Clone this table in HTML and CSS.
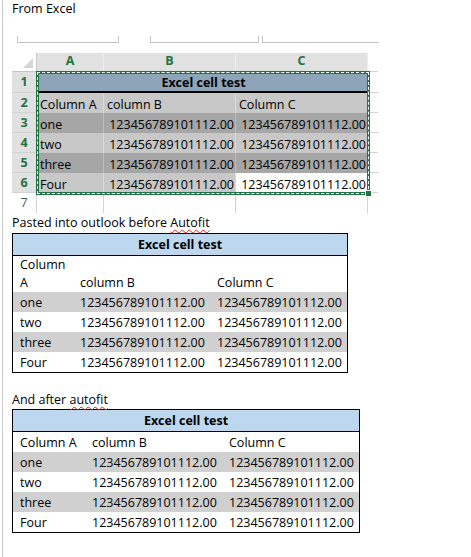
FILE: index.html
```html
<!DOCTYPE html>
<html>
<head>
<meta charset="utf-8">
<title>Excel paste</title>
<link rel="stylesheet" href="styles.css">
</head>
<body>
<div class="page">
  <p class="label">From Excel</p>
  <div class="brackets"><span class="br br1"></span><span class="br br2"></span><span class="br br3"></span></div>

  <div class="sheet">
    <div class="corner"><svg width="25" height="19" viewBox="0 0 25 19"><polygon points="11,15 21,15 21,5" fill="#d6d6d6"/></svg></div>
    <div class="colhdr">A</div>
    <div class="colhdr">B</div>
    <div class="colhdr">C</div>
    <div class="edge"></div>

    <div class="rowhdr">1</div>
    <div class="cell title">Excel cell test</div>
    <div class="edge"></div>

    <div class="rowhdr">2</div>
    <div class="cell lt">Column A</div>
    <div class="cell lt">column B</div>
    <div class="cell lt">Column C</div>
    <div class="edge"></div>

    <div class="rowhdr">3</div>
    <div class="cell dk">one</div>
    <div class="cell dk num">123456789101112.00</div>
    <div class="cell dk num">123456789101112.00</div>
    <div class="edge"></div>

    <div class="rowhdr">4</div>
    <div class="cell lt">two</div>
    <div class="cell lt num">123456789101112.00</div>
    <div class="cell lt num">123456789101112.00</div>
    <div class="edge"></div>

    <div class="rowhdr">5</div>
    <div class="cell dk">three</div>
    <div class="cell dk num">123456789101112.00</div>
    <div class="cell dk num">123456789101112.00</div>
    <div class="edge"></div>

    <div class="rowhdr">6</div>
    <div class="cell lt">Four</div>
    <div class="cell lt num">123456789101112.00</div>
    <div class="cell num">123456789101112.00</div>
    <div class="edge"></div>

    <div class="rowhdr off">7</div>
    <div class="cell"></div>
    <div class="cell"></div>
    <div class="cell"></div>
    <div class="edge blank"></div>

    <div class="selection"></div>
  </div>

  <p class="label after-sheet">Pasted into outlook before <span class="sp">Autofit</span></p>
  <table class="ol ol1">
    <colgroup><col class="c1"><col class="c2"><col class="c3"></colgroup>
    <thead><tr><th colspan="3">Excel cell test</th></tr></thead>
    <tbody>
      <tr class="two-line"><td>Column A</td><td>column B</td><td>Column C</td></tr>
      <tr class="g"><td>one</td><td>123456789101112.00</td><td>123456789101112.00</td></tr>
      <tr><td>two</td><td>123456789101112.00</td><td>123456789101112.00</td></tr>
      <tr class="g"><td>three</td><td>123456789101112.00</td><td>123456789101112.00</td></tr>
      <tr><td>Four</td><td>123456789101112.00</td><td>123456789101112.00</td></tr>
    </tbody>
  </table>

  <p class="label after-table">And after <span class="sp">autofit</span></p>
  <table class="ol ol2">
    <colgroup><col class="c1"><col class="c2"><col class="c3"></colgroup>
    <thead><tr><th colspan="3">Excel cell test</th></tr></thead>
    <tbody>
      <tr><td>Column A</td><td>column B</td><td>Column C</td></tr>
      <tr class="g"><td>one</td><td>123456789101112.00</td><td>123456789101112.00</td></tr>
      <tr><td>two</td><td>123456789101112.00</td><td>123456789101112.00</td></tr>
      <tr class="g"><td>three</td><td>123456789101112.00</td><td>123456789101112.00</td></tr>
      <tr><td>Four</td><td>123456789101112.00</td><td>123456789101112.00</td></tr>
    </tbody>
  </table>
</div>
</body>
</html>
```

FILE: styles.css
```css
body {
  margin: 0;
  background: #fff;
  font-family: "Open Sans", "Noto Sans", sans-serif;
  font-size: 12.5px;
  color: #000;
}

.page {
  margin-left: 2px;
  border-left: 1px solid #c8c8c8;
  padding-left: 9px;
  min-height: 557px;
  box-sizing: border-box;
}

.label {
  margin: 0;
  line-height: 18px;
  white-space: nowrap;
}

.after-sheet { margin-top: 1px; }
.after-table { margin-top: 18px; }

.sp {
  text-decoration: underline wavy #e02020;
  text-decoration-thickness: 1px;
  text-decoration-skip-ink: none;
  text-underline-offset: 2px;
}

/* ruler brackets */
.brackets {
  display: flex;
  margin-top: 18px;
  height: 7px;
}
.br {
  height: 7px;
  box-sizing: border-box;
  border: 1px solid #c3c3c3;
  border-top: none;
}
.br1 { margin-left: 5px; width: 102px; }
.br2 { margin-left: 31px; width: 109px; }
.br3 { margin-left: 3px; width: 117px; border-right: none; }

/* excel sheet */
.sheet {
  position: relative;
  margin-top: 10px;
  width: 366px;
  display: grid;
  grid-template-columns: 25px 67px 132px 132px 10px;
  grid-template-rows: 19px 21px repeat(6, 20px);
}
.sheet > div { box-sizing: border-box; overflow: hidden; white-space: nowrap; }

.corner {
  background: #fff;
  border-right: 1px solid #c6c6c6;
  border-bottom: 1px solid #c6c6c6;
}
.corner svg { display: block; }

.colhdr {
  background: #e1e1e1;
  color: #217346;
  font-weight: bold;
  text-align: center;
  line-height: 16px;
  border-right: 1px solid #eeeeee;
  border-bottom: 1px solid #c6c6c6;
}

.rowhdr {
  background: #e1e1e1;
  color: #217346;
  font-weight: bold;
  text-align: center;
  line-height: 20px;
  border-right: 1px solid #c6c6c6;
  border-bottom: 1px solid #d2d2d2;
}
.rowhdr.off {
  background: #fff;
  color: #3f5877;
  font-weight: normal;
  border-bottom: none;
  border-right: 1px solid #d4d4d4;
}

.edge { border-bottom: 1px solid #d4d4d4; }
.edge.blank { border-bottom: none; }

.cell {
  padding: 2px 1px 0 3px;
  line-height: 19px;
  border-right: 1px solid #d4d4d4;
}
.cell.title {
  grid-column: 2 / span 3;
  background: #8da4b9;
  font-weight: bold;
  text-align: center;
  padding-top: 1px;
  border-bottom: 2px solid #000;
  border-right: none;
}
.cell.lt { background: #c8c8c8; border-right-color: #d9d9d9; }
.cell.dk { background: #a6a6a6; border-right-color: #bdbdbd; }
.cell.num { text-align: right; }

.selection {
  position: absolute;
  left: 24px;
  top: 18px;
  width: 334px;
  height: 124px;
  box-sizing: border-box;
  border: 3px solid #217346;
  overflow: visible !important;
  pointer-events: none;
}
.selection::before {
  content: "";
  position: absolute;
  left: -2px;
  top: -2px;
  right: -2px;
  bottom: -2px;
  border: 1px dashed #fff;
}
.selection::after {
  content: "";
  position: absolute;
  right: -5px;
  bottom: -5px;
  width: 5px;
  height: 5px;
  background: #217346;
  border: 1px solid #fff;
}

/* outlook tables */
.ol {
  border-collapse: separate;
  border-spacing: 0;
  border: 1px solid #000;
  table-layout: fixed;
  box-sizing: border-box;
}
.ol1 { width: 336px; margin-top: 1px; }
.ol2 { width: 348px; }
.ol1 .c1 { width: 60px; }
.ol2 .c1 { width: 72px; }
.ol .c2, .ol .c3 { width: 137px; }

.ol th {
  background: #bdd7ee;
  border-bottom: 1px solid #000;
  font-weight: bold;
  text-align: center;
  padding: 1px 0 0;
  line-height: 20px;
  height: 21px;
  box-sizing: border-box;
}
.ol td {
  padding: 2px 2px 0 7px;
  line-height: 18px;
  height: 20px;
  box-sizing: border-box;
  vertical-align: bottom;
  white-space: normal;
}
.ol tr.two-line td {
  padding-top: 0;
  padding-right: 7px;
  height: 36px;
}
.ol tr.g td { background: #d0d0d0; }
```
